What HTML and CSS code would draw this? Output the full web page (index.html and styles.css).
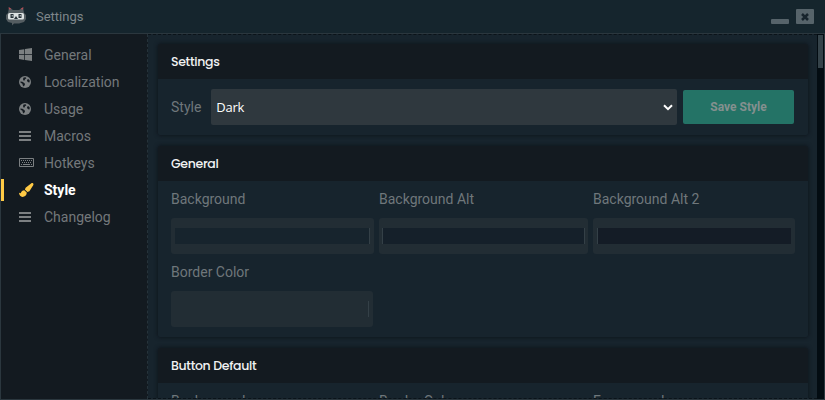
FILE: index.html
```html
<!DOCTYPE html>
<html lang="en">
<head>
<meta charset="utf-8">
<title>Settings</title>
<link rel="stylesheet" href="styles.css">
</head>
<body>
<svg class="defs" width="0" height="0">
  <symbol id="globe" viewBox="0 0 12 12"><circle cx="6" cy="6" r="6" fill="#7c8082"/><path fill="#141a20" d="M4.6 1.4 6.6 1.2 7.4 2.2 6 3.2 5.6 4.4 4.4 4.6 4 3zM8.2 3.6 9.8 3.2 10.8 4.8 10.4 6.6 9.2 6.2 8 5zM1.4 5.4 3.4 5.8 5.6 7.2 6 8.4 4.8 10.6 3.8 9.4 3.4 7.8 1.6 6.8z"/></symbol>
  <symbol id="bars" viewBox="0 0 12 12"><path fill="#7c8082" d="M0 1h12v2H0zM0 5h12v2H0zM0 9h12v2H0z"/></symbol>
</svg>
<div class="window">
  <header class="titlebar">
    <svg class="logo" width="22" height="20" viewBox="0 0 22 20">
      <path fill="#545d61" d="M3 7 4 1.5 8 4h6l4-2.5L19 7l2 2v4l-2 3-5 1.5H9L7 19.5V17l-4-1-2-3V9z"/>
      <path fill="#b94d55" d="m3.6 1 3 2L4 3.6zM18.4 1l-3 2 2.6.6z"/>
      <rect x="3" y="7" width="16" height="6.5" rx="1.5" fill="#dce1e1"/>
      <path fill="#273239" d="M5.5 8h3v4h-3zM13.5 8h3v4h-3zM11 10l2 3H9z"/>
      <path fill="#c7cdcd" d="M6.7 9h1v1.5h-1zM14.7 9h1v1.5h-1z"/>
    </svg>
    <span class="title">Settings</span>
    <span class="minimize"></span>
    <span class="close"><svg width="8" height="8" viewBox="0 0 8 8"><path d="m1 1 6 6M7 1 1 7" stroke="#17242d" stroke-width="2.5"/></svg></span>
  </header>
  <div class="main">
    <nav class="sidebar">
      <a class="item"><i><svg width="13" height="13" viewBox="0 0 13 13"><path fill="#7c8082" d="M0 2l5.3-.8v5H0zM6 1.1 13 0v6.2H6zM0 6.9h5.3v5L0 11.1zM6 6.9h7V13l-7-1z"/></svg></i>General</a>
      <a class="item"><i><svg width="12" height="12"><use href="#globe"/></svg></i>Localization</a>
      <a class="item"><i><svg width="12" height="12"><use href="#globe"/></svg></i>Usage</a>
      <a class="item"><i><svg width="12" height="12"><use href="#bars"/></svg></i>Macros</a>
      <a class="item"><i><svg width="15" height="9" viewBox="0 0 15 9"><path fill="none" stroke="#7c8082" d="M.5.5h14v8H.5z"/><path fill="none" stroke="#7c8082" stroke-dasharray="1 1" d="M2 2.5h11M3 4.5h10"/><path stroke="#7c8082" d="M2 6.5h1M4 6.5h7M12 6.5h1"/></svg></i>Hotkeys</a>
      <a class="item active"><i><svg width="15" height="14" viewBox="0 0 15 14"><path fill="#ffca45" d="M12.4.2C13.8-.3 15 .8 14.2 2.3L10.4 8.2 8.4 9 5.9 6.6 6.6 4.8zM5.2 7.2 7.7 9.6C8 12 6 13.9 3.5 13.9 1.5 13.9.3 12.4 0 9.8L1.7 10.3C2.4 8.3 3.5 7.2 5.2 7.2z"/></svg></i>Style</a>
      <a class="item"><i><svg width="12" height="12"><use href="#bars"/></svg></i>Changelog</a>
    </nav>
    <main class="content">
      <section class="panel">
        <h2>Settings</h2>
        <div class="row">
          <label>Style</label>
          <div class="select"><span>Dark</span><svg width="10" height="7" viewBox="0 0 10 7"><path d="m1 1.2 4 4 4-4" fill="none" stroke="#fff" stroke-width="2"/></svg></div>
          <button class="save">Save Style</button>
        </div>
      </section>
      <section class="panel">
        <h2>General</h2>
        <div class="fields">
          <div class="field"><label>Background</label><div class="well"><div class="swatch bg"></div></div></div>
          <div class="field"><label>Background Alt</label><div class="well"><div class="swatch alt"></div></div></div>
          <div class="field"><label>Background Alt 2</label><div class="well"><div class="swatch alt2"></div></div></div>
          <div class="field short"><label>Border Color</label><div class="well"><div class="swatch line"></div></div></div>
        </div>
      </section>
      <section class="panel">
        <h2>Button Default</h2>
        <div class="fields">
          <div class="field"><label>Background</label></div>
          <div class="field"><label>Border Color</label></div>
          <div class="field"><label>Foreground</label></div>
        </div>
      </section>
    </main>
    <div class="scrollbar"><div class="thumb"></div></div>
  </div>
</div>
</body>
</html>
```
FILE: styles.css
```css
* { box-sizing: border-box; }
body { margin: 0; background: #17242d; color: #6f777b; font: 14px/20px Roboto, sans-serif; overflow: hidden; }
.defs { display: none; }
.window { height: 400px; display: flex; flex-direction: column; }
.titlebar { height: 33px; flex: none; display: flex; align-items: center; padding: 0 11px 0 5px; background: #15252d; }
.logo { margin-top: -1px; }
.title { margin-left: 9px; flex: 1; font-size: 13px; color: #7e868a; }
.minimize { width: 18px; height: 5px; margin: 10px 7px 0 0; border-radius: 1px; background: #56636a; }
.close { width: 18px; height: 15px; border-radius: 1px; background: #56636a; display: flex; align-items: center; justify-content: center; }
.main { flex: 1; min-height: 0; display: flex; border: 1px solid #2b373e; }
.sidebar { width: 147px; flex: none; padding-top: 7px; background: #131a20; border-right: 1px dashed #26333a; }
.item { height: 27px; display: flex; align-items: center; padding-left: 18px; color: #73787b; }
.item i { width: 25px; display: flex; align-items: center; }
.item.active { position: relative; color: #fff; font-weight: 700; }
.item.active::before { content: ""; position: absolute; left: 0; top: 3px; width: 3px; height: 22px; background: #ffca45; }
.content { flex: 1; min-width: 0; overflow: hidden; border: 1px dashed #0b1319; border-width: 1px 0; padding: 9px 9px 0 10px; display: flex; flex-direction: column; gap: 11px; }
.panel { flex: none; background: #17242d; box-shadow: 0 0 4px #0b1117; border-radius: 2px; }
h2 { margin: 0; height: 35px; padding-left: 13px; font: 500 12.5px/35px Poppins, Inter, sans-serif; letter-spacing: -.33px; color: #f1f2f3; background: #131a20; border-radius: 2px 2px 0 0; }
.row { height: 56px; display: flex; align-items: center; padding: 0 14px 0 13px; }
.select { flex: 1; height: 36px; margin: 0 6px 0 10px; padding: 0 4px 0 5px; display: flex; align-items: center; justify-content: space-between; border-radius: 2px; background: #2f383e; color: #fff; font: 13px/36px "Open Sans", sans-serif; letter-spacing: -.3px; }
.save { width: 111px; height: 34px; padding: 0; border: 0; border-radius: 2px; background: #247366; color: #84908f; font: 700 12px Roboto, sans-serif; }
.fields { display: grid; grid-template-columns: 203px 209px 202px; column-gap: 5px; row-gap: 8px; padding: 8px 13px 10px; }
.field label { display: block; height: 20px; }
.field.short { width: 202px; }
.well { height: 36px; margin-top: 9px; padding: 10px 4px; border-radius: 3px; background: #222d34; }
.swatch { height: 16px; }
.bg { background: #17242d; border-right: 1px solid #344047; }
.alt { background: #15202a; border: solid #344047; border-width: 0 1px; margin: 0 -1px; }
.alt2 { background: #141c26; border-left: 1px solid #344047; }
.line { border-right: 1px solid #344047; }
.scrollbar { width: 7px; flex: none; background: #030c12; padding: 1px 1px 0; }
.thumb { height: 33px; background: #35434a; }
```
